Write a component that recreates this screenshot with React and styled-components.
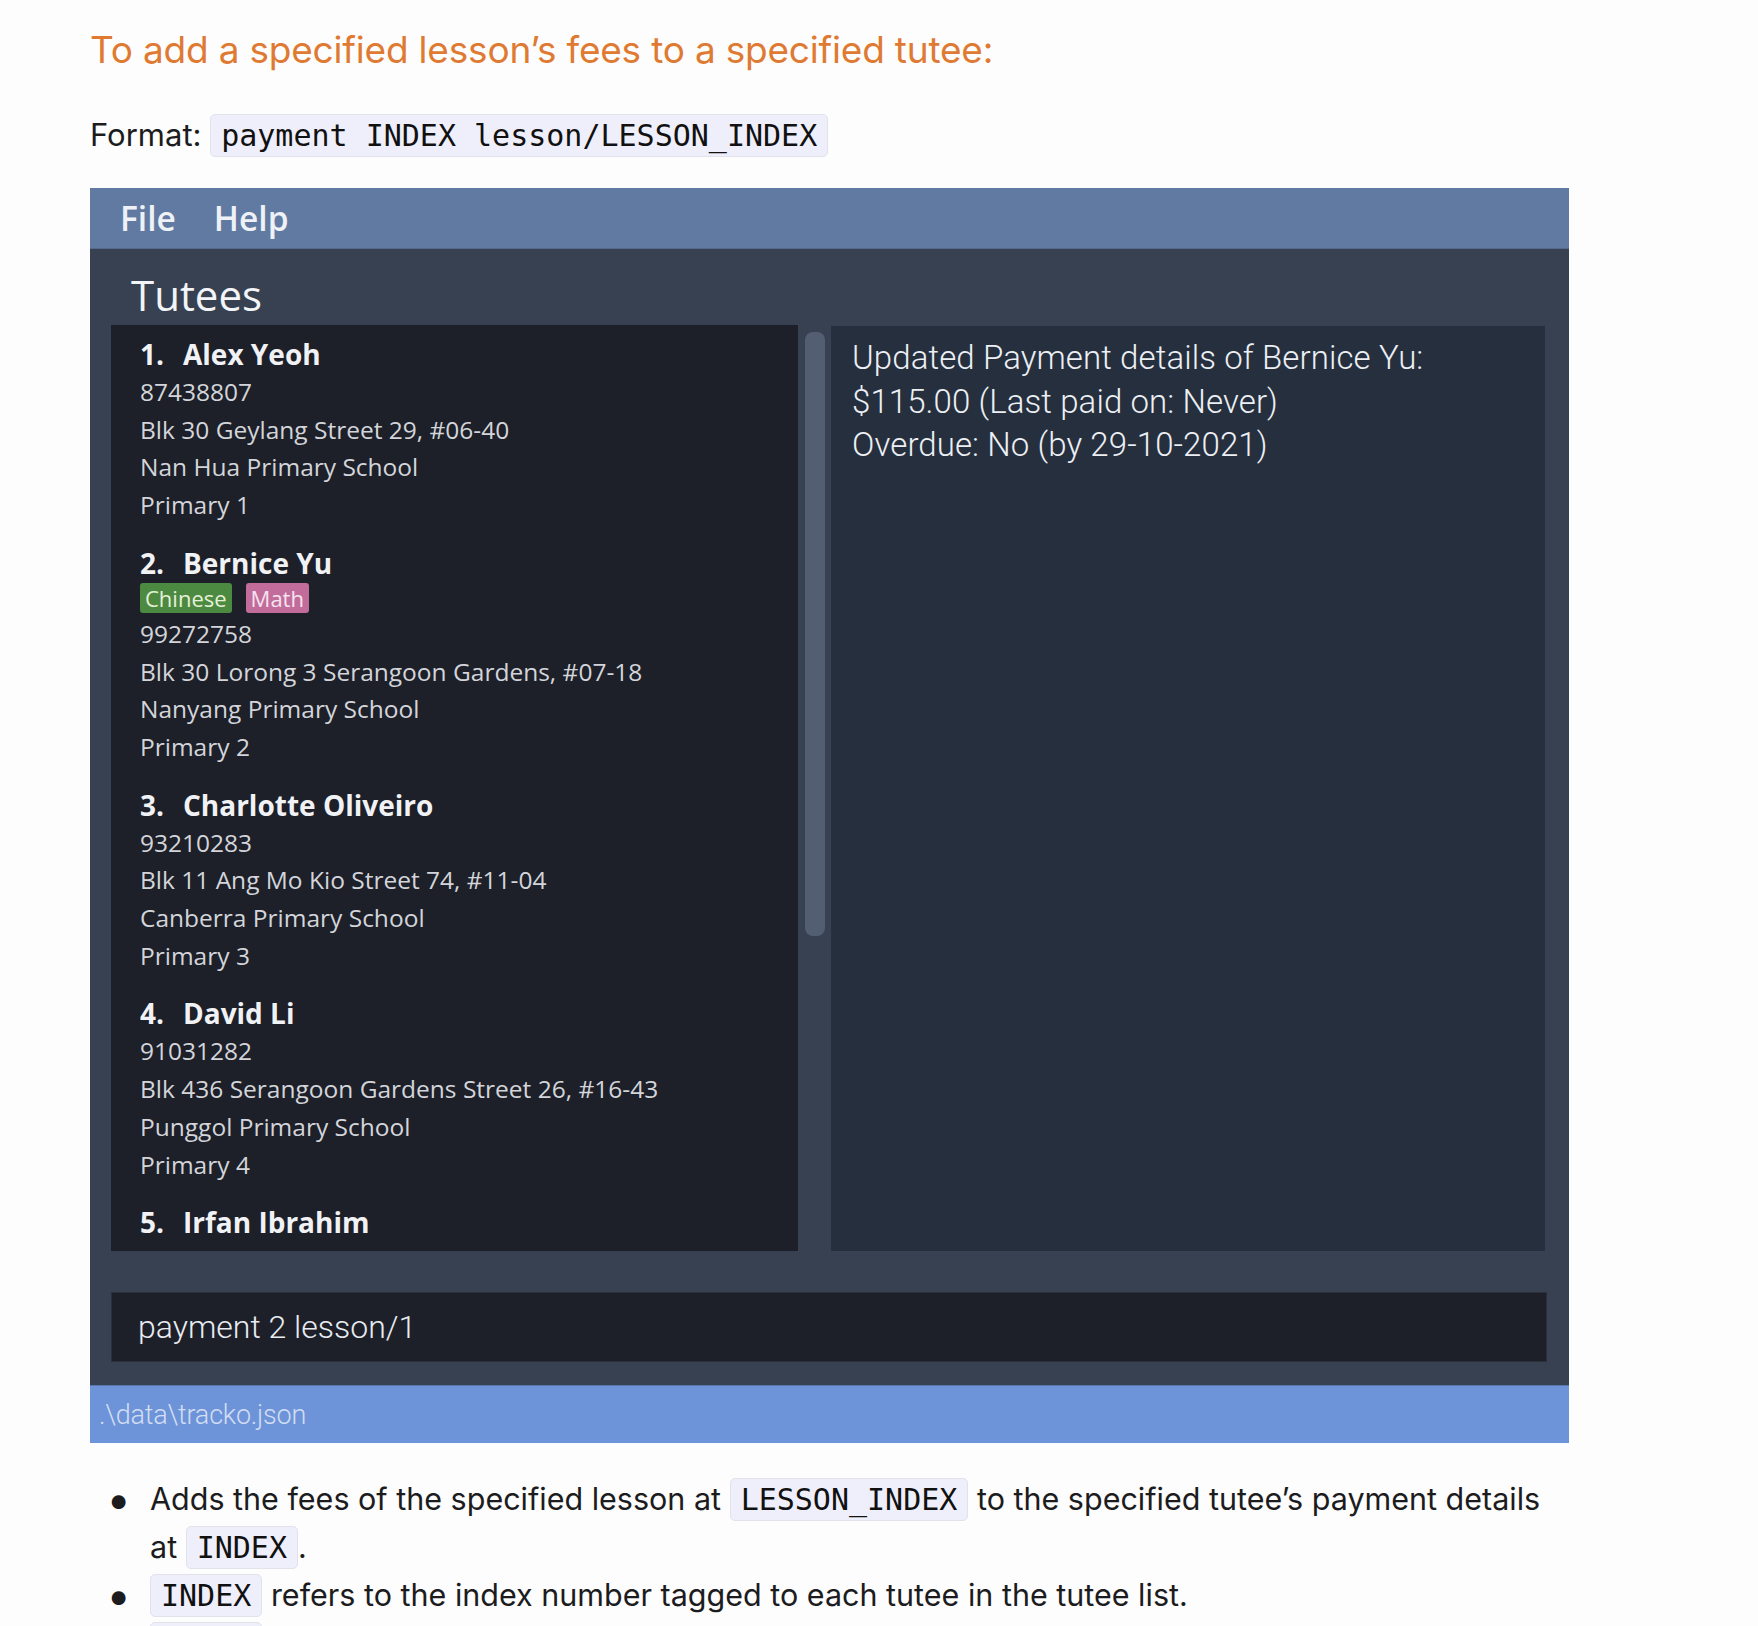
import React from "react";
import styled, { createGlobalStyle } from "styled-components";

const GlobalStyle = createGlobalStyle`
  body {
    margin: 0;
    background: #fdfdfd;
  }
`;

const Page = styled.div`
  box-sizing: border-box;
  height: 1626px;
  overflow: hidden;
  padding: 26px 0 0 90px;
  font-family: Inter, "Liberation Sans", sans-serif;
  color: #1c1c1e;
`;

const Heading = styled.h3`
  margin: 0;
  font-size: 37px;
  line-height: 48px;
  font-weight: 400;
  letter-spacing: -0.2px;
  color: #df7a33;
`;

const Para = styled.p`
  margin: 37px 0 0;
  font-size: 31px;
  line-height: 48px;
`;

const Code = styled.code`
  display: inline-block;
  padding: 0 10px;
  line-height: 41px;
  font-family: "DejaVu Sans Mono", "Liberation Mono", monospace;
  font-size: 30px;
  color: #111;
  background: #efeffb;
  border: 1px solid #e1e2ea;
  border-radius: 5px;
`;

/* ---------- app window ---------- */

const Window = styled.div`
  margin-top: 29px;
  width: 1479px;
  background: #384152;
  font-family: "Open Sans", "Noto Sans", sans-serif;
`;

const MenuBar = styled.div`
  box-sizing: border-box;
  height: 61px;
  display: flex;
  align-items: center;
  gap: 38px;
  padding-left: 30px;
  background: #617aa1;
  border-bottom: 1px solid #55698c;
`;

const MenuItem = styled.span`
  font-size: 33.5px;
  font-weight: 600;
  color: #eef1f6;
`;

const Main = styled.div`
  display: flex;
  flex-direction: column;
  padding: 0 22px 23px 21px;
`;

const PanelTitle = styled.div`
  box-sizing: border-box;
  height: 76px;
  display: flex;
  align-items: flex-end;
  padding: 0 0 5px 20px;
  font-size: 42px;
  line-height: 1.2;
  font-weight: 500;
  color: #f2f4f7;
`;

const Panels = styled.div`
  display: flex;
  height: 926px;
`;

const ListBox = styled.div`
  box-sizing: border-box;
  width: 687px;
  padding-left: 29px;
  overflow: hidden;
  background: #1d2029;
`;

const ScrollTrack = styled.div`
  box-sizing: border-box;
  width: 33px;
  padding: 7px 6px 0 7px;
`;

const Thumb = styled.div`
  height: 604px;
  border-radius: 8px;
  background: #545e72;
`;

const ResultBox = styled.div`
  flex: 1;
  margin-right: 2px;
  margin-top: 1px;
  padding: 10px 21px;
  background: #262f3e;
`;

const ResultLine = styled.div`
  font-family: Roboto, "Liberation Sans", sans-serif;
  font-weight: 300;
  font-size: 33px;
  line-height: 43.7px;
  letter-spacing: 0.1px;
  color: #eceff4;
`;

const Tutee = styled.div`
  padding: 10px 0;
`;

const Name = styled.div`
  display: flex;
  gap: 19px;
  font-size: 28px;
  line-height: 38px;
  font-weight: 700;
  color: #f1f2f5;
`;

const Detail = styled.div`
  font-size: 24.5px;
  line-height: 37.7px;
  color: #d3d5da;
`;

const Tags = styled.div`
  display: flex;
  gap: 14px;
  height: 33px;
  padding-top: 1px;
  box-sizing: border-box;
`;

const Tag = styled.span`
  height: 30px;
  padding: 0 5px;
  border-radius: 3px;
  font-size: 22px;
  line-height: 30px;
  background: ${(p) => p.$bg};
  color: ${(p) => p.$fg};
`;

const CommandBox = styled.div`
  box-sizing: border-box;
  height: 70px;
  margin-top: 41px;
  display: flex;
  align-items: center;
  padding-left: 26px;
  background: #1e2029;
  border: 1px solid #2b303b;
  font-family: Roboto, "Liberation Sans", sans-serif;
  font-weight: 300;
  font-size: 32px;
  color: #e8ecf2;
`;

const StatusBar = styled.div`
  box-sizing: border-box;
  height: 58px;
  display: flex;
  align-items: center;
  padding-left: 9px;
  background: #6d93d9;
  border-top: 1px solid #5a78b0;
  font-family: Roboto, "Liberation Sans", sans-serif;
  font-weight: 300;
  font-size: 27px;
  letter-spacing: -0.2px;
  color: #d2ddf3;
`;

/* ---------- notes below ---------- */

const Bullets = styled.ul`
  width: 1560px;
  margin: 32px 0 0 -90px;
  padding: 0;
  list-style: none;
  font-size: 30.5px;
  line-height: 48px;
`;

const Item = styled.li`
  display: flex;
  align-items: flex-start;
`;

const Dot = styled.span`
  flex: 0 0 150px;
  box-sizing: border-box;
  padding-right: 19px;
  text-align: right;
  font-size: 44px;
  line-height: 48px;
`;

const ItemText = styled.span`
  flex: 1;
`;

const tutees = [
  {
    name: "Alex Yeoh",
    phone: "87438807",
    address: "Blk 30 Geylang Street 29, #06-40",
    school: "Nan Hua Primary School",
    level: "Primary 1",
  },
  {
    name: "Bernice Yu",
    tags: [
      { label: "Chinese", bg: "#4c8a42", fg: "#e6f0d6" },
      { label: "Math", bg: "#c26c9b", fg: "#f6e3ef" },
    ],
    phone: "99272758",
    address: "Blk 30 Lorong 3 Serangoon Gardens, #07-18",
    school: "Nanyang Primary School",
    level: "Primary 2",
  },
  {
    name: "Charlotte Oliveiro",
    phone: "93210283",
    address: "Blk 11 Ang Mo Kio Street 74, #11-04",
    school: "Canberra Primary School",
    level: "Primary 3",
  },
  {
    name: "David Li",
    phone: "91031282",
    address: "Blk 436 Serangoon Gardens Street 26, #16-43",
    school: "Punggol Primary School",
    level: "Primary 4",
  },
  {
    // only the name is scrolled into view
    name: "Irfan Ibrahim",
  },
];

function TuteeCard({ index, tutee }) {
  const details = [tutee.phone, tutee.address, tutee.school, tutee.level].filter(Boolean);
  return (
    <Tutee>
      <Name>
        <span>{index}.</span>
        <span>{tutee.name}</span>
      </Name>
      {tutee.tags && (
        <Tags>
          {tutee.tags.map((t) => (
            <Tag key={t.label} $bg={t.bg} $fg={t.fg}>
              {t.label}
            </Tag>
          ))}
        </Tags>
      )}
      {details.map((d) => (
        <Detail key={d}>{d}</Detail>
      ))}
    </Tutee>
  );
}

function Bullet({ children }) {
  return (
    <Item>
      <Dot>•</Dot>
      <ItemText>{children}</ItemText>
    </Item>
  );
}

export default function App() {
  return (
    <>
      <GlobalStyle />
      <Page>
        <Heading>To add a specified lesson’s fees to a specified tutee:</Heading>
        <Para>
          Format: <Code>payment INDEX lesson/LESSON_INDEX</Code>
        </Para>

        <Window>
          <MenuBar>
            <MenuItem>File</MenuItem>
            <MenuItem>Help</MenuItem>
          </MenuBar>
          <Main>
            <PanelTitle>Tutees</PanelTitle>
            <Panels>
              <ListBox>
                {tutees.map((t, i) => (
                  <TuteeCard key={t.name} index={i + 1} tutee={t} />
                ))}
              </ListBox>
              <ScrollTrack>
                <Thumb />
              </ScrollTrack>
              <ResultBox>
                <ResultLine>Updated Payment details of Bernice Yu:</ResultLine>
                <ResultLine>$115.00 (Last paid on: Never)</ResultLine>
                <ResultLine>Overdue: No (by 29-10-2021)</ResultLine>
              </ResultBox>
            </Panels>
            <CommandBox>payment 2 lesson/1</CommandBox>
          </Main>
          <StatusBar>.\data\tracko.json</StatusBar>
        </Window>

        <Bullets>
          <Bullet>
            Adds the fees of the specified lesson at <Code>LESSON_INDEX</Code> to the
            specified tutee’s payment details at <Code>INDEX</Code>.
          </Bullet>
          <Bullet>
            <Code>INDEX</Code> refers to the index number tagged to each tutee in the
            tutee list.
          </Bullet>
          <Bullet>
            <Code>INDEX</Code> must be a positive integer 1, 2, 3, …
          </Bullet>
        </Bullets>
      </Page>
    </>
  );
}
